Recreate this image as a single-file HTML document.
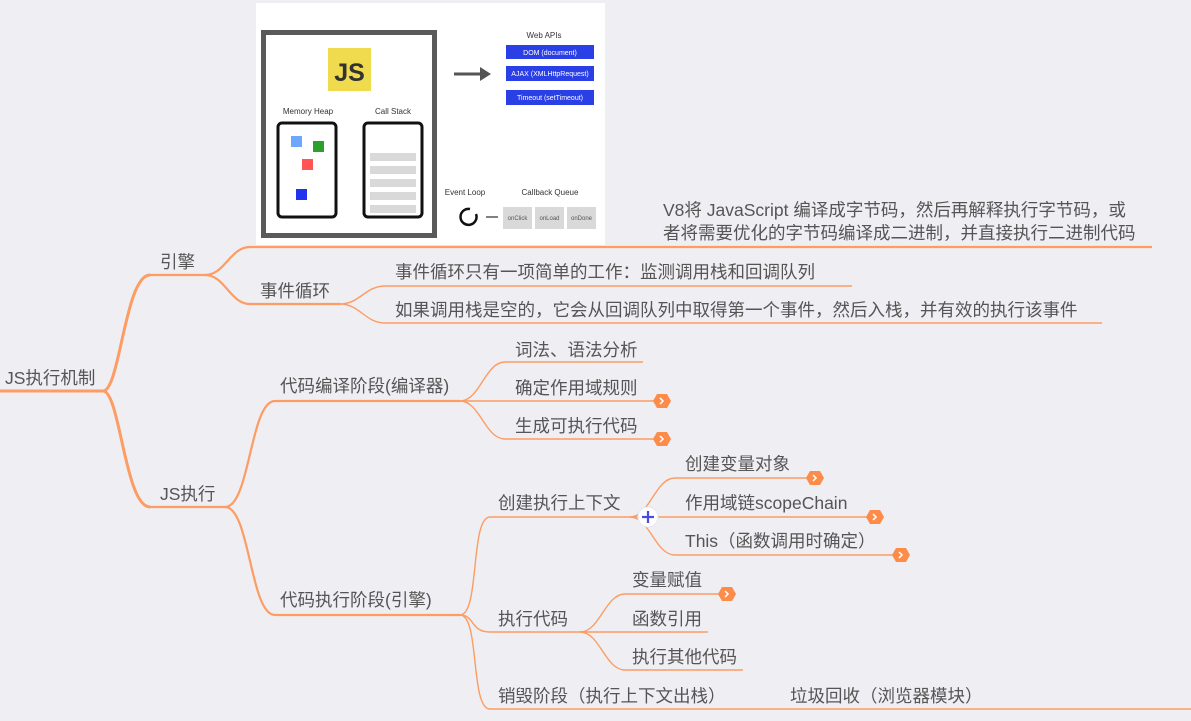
<!DOCTYPE html>
<html><head><meta charset="utf-8"><style>
html,body{margin:0;padding:0;background:#eeeef3;}
svg{display:block}
text{font-family:"Liberation Sans","Noto Sans CJK SC",sans-serif;fill:#555;}
.t{font-size:17.5px;}
.o{fill:none;stroke:#fd9c63;}
</style></head><body>
<svg width="1191" height="721" viewBox="0 0 1191 721">
<rect width="1191" height="721" fill="#eeeef3"/>
<!-- image -->
<rect x="256" y="3" width="349" height="242" fill="#fff"/>
<rect x="263.5" y="32.5" width="171" height="203" fill="none" stroke="#5a5a5a" stroke-width="5"/>
<rect x="328" y="48" width="43" height="43" fill="#f0db4f"/>
<text x="349.5" y="81" text-anchor="middle" style="font-size:25px;font-weight:bold;fill:#323330">JS</text>
<text x="308" y="114" text-anchor="middle" style="font-size:8px;fill:#333">Memory Heap</text>
<text x="393" y="114" text-anchor="middle" style="font-size:8px;fill:#333">Call Stack</text>
<rect x="278" y="123" width="58" height="94" rx="4" fill="none" stroke="#111" stroke-width="3"/>
<rect x="364" y="123" width="58" height="94" rx="4" fill="none" stroke="#111" stroke-width="3"/>
<rect x="291" y="136" width="11" height="11" fill="#6ea8fe"/>
<rect x="313" y="141" width="11" height="11" fill="#2ca02c"/>
<rect x="302" y="159" width="11" height="11" fill="#f55"/>
<rect x="296" y="189" width="11" height="11" fill="#2233ee"/>
<g fill="#d9d9d9"><rect x="370" y="153" width="46" height="8"/><rect x="370" y="166" width="46" height="8"/><rect x="370" y="179" width="46" height="8"/><rect x="370" y="192" width="46" height="8"/><rect x="370" y="205" width="46" height="8"/></g>
<line x1="454" y1="74" x2="482" y2="74" stroke="#555" stroke-width="3"/>
<polygon points="480,67 491,74 480,81" fill="#555"/>
<text x="544" y="38" text-anchor="middle" style="font-size:8px;fill:#333">Web APIs</text>
<g fill="#2b3fe6"><rect x="506" y="45" width="88" height="14"/><rect x="506" y="66" width="88" height="15"/><rect x="506" y="90" width="88" height="15"/></g>
<g style="font-size:7px" text-anchor="middle"><text x="550" y="55" style="fill:#fff">DOM (document)</text><text x="550" y="76" style="fill:#fff">AJAX (XMLHttpRequest)</text><text x="550" y="100" style="fill:#fff">Timeout (setTimeout)</text></g>
<text x="465" y="195" text-anchor="middle" style="font-size:8px;fill:#333">Event Loop</text>
<text x="550" y="195" text-anchor="middle" style="font-size:8px;fill:#333">Callback Queue</text>
<path d="M470 209 A8 8 0 1 0 476 214" fill="none" stroke="#111" stroke-width="2.5"/>
<line x1="486" y1="217" x2="498" y2="217" stroke="#555" stroke-width="1.5"/>
<g fill="#d9d9d9"><rect x="503" y="207" width="29" height="22"/><rect x="535" y="207" width="29" height="22"/><rect x="567" y="207" width="29" height="22"/></g>
<g style="font-size:6px" text-anchor="middle"><text x="517.5" y="220">onClick</text><text x="549.5" y="220">onLoad</text><text x="581.5" y="220">onDone</text></g>

<!-- lines -->
<g class="o" stroke-width="3"><path d="M0 391 H103 C120 391 125 275 150 275"/><path d="M103 391 C120 391 125 507 150 507"/></g>
<g class="o" stroke-width="2.2"><path d="M150 275 H205"/><path d="M150 507 H225"/>
<path d="M205 275 C225 275 230 247 250 247 H1152"/><path d="M205 275 C225 275 230 304 250 304 H340"/>
<path d="M225 507 C250 507 250 401 275 401 H460"/><path d="M225 507 C250 507 250 615 275 615 H460"/></g>
<g class="o" stroke-width="1.4">
<path d="M340 304 C360 304 365 286 385 286 H852"/><path d="M340 304 C360 304 365 323 385 323 H1102"/>
<path d="M460 401 C480 401 485 362 505 362 H643"/><path d="M460 401 H655"/><path d="M460 401 C480 401 485 439 505 439 H655"/>
<path d="M460 615 C480 615 470 517 490 517 H630"/><path d="M460 615 C475 615 470 632 490 632 H580"/><path d="M460 615 C480 615 470 709 490 709 H1191"/>
<path d="M630 517 C650 517 655 478 675 478 H808"/><path d="M630 517 H870"/><path d="M630 517 C650 517 655 555 675 555 H895"/>
<path d="M580 632 C600 632 605 594 625 594 H720"/><path d="M580 632 H708"/><path d="M580 632 C600 632 605 670 625 670 H743"/>
</g>
<!-- badges -->
<g fill="#fd8c4a">
<path d="M653 401 l4 -7 h10 l4 7 l-4 7 h-10z"/><path d="M653 439 l4 -7 h10 l4 7 l-4 7 h-10z"/>
<path d="M806 478 l4 -7 h10 l4 7 l-4 7 h-10z"/><path d="M866 517 l4 -7 h10 l4 7 l-4 7 h-10z"/>
<path d="M892 555 l4 -7 h10 l4 7 l-4 7 h-10z"/><path d="M718 594 l4 -7 h10 l4 7 l-4 7 h-10z"/>
</g>
<g fill="none" stroke="#fff" stroke-width="1.5"><path d="M660 398 l3 3 l-3 3"/><path d="M660 436 l3 3 l-3 3"/><path d="M813 475 l3 3 l-3 3"/><path d="M873 514 l3 3 l-3 3"/><path d="M899 552 l3 3 l-3 3"/><path d="M725 591 l3 3 l-3 3"/></g>
<circle cx="648" cy="517" r="10" fill="#fff" stroke="#e6e6ee"/>
<path d="M642 517 h12 M648 511 v12" stroke="#4a4adf" stroke-width="2.2"/>

<!-- text -->
<g class="t">
<text x="5" y="384">JS执行机制</text>
<text x="160" y="268">引擎</text>
<text x="160" y="500">JS执行</text>
<text x="260" y="297">事件循环</text>
<text x="663" y="216">V8将 JavaScript 编译成字节码，然后再解释执行字节码，或</text>
<text x="663" y="239">者将需要优化的字节码编译成二进制，并直接执行二进制代码</text>
<text x="395" y="278">事件循环只有一项简单的工作：监测调用栈和回调队列</text>
<text x="395" y="316">如果调用栈是空的，它会从回调队列中取得第一个事件，然后入栈，并有效的执行该事件</text>
<text x="280" y="392">代码编译阶段(编译器)</text>
<text x="280" y="606">代码执行阶段(引擎)</text>
<text x="515" y="356">词法、语法分析</text>
<text x="515" y="394">确定作用域规则</text>
<text x="515" y="432">生成可执行代码</text>
<text x="498" y="509">创建执行上下文</text>
<text x="498" y="625">执行代码</text>
<text x="498" y="702">销毁阶段（执行上下文出栈）</text>
<text x="790" y="702">垃圾回收（浏览器模块）</text>
<text x="685" y="470">创建变量对象</text>
<text x="685" y="509">作用域链scopeChain</text>
<text x="685" y="547">This（函数调用时确定）</text>
<text x="632" y="586">变量赋值</text>
<text x="632" y="625">函数引用</text>
<text x="632" y="663">执行其他代码</text>
</g>
</svg>
</body></html>
